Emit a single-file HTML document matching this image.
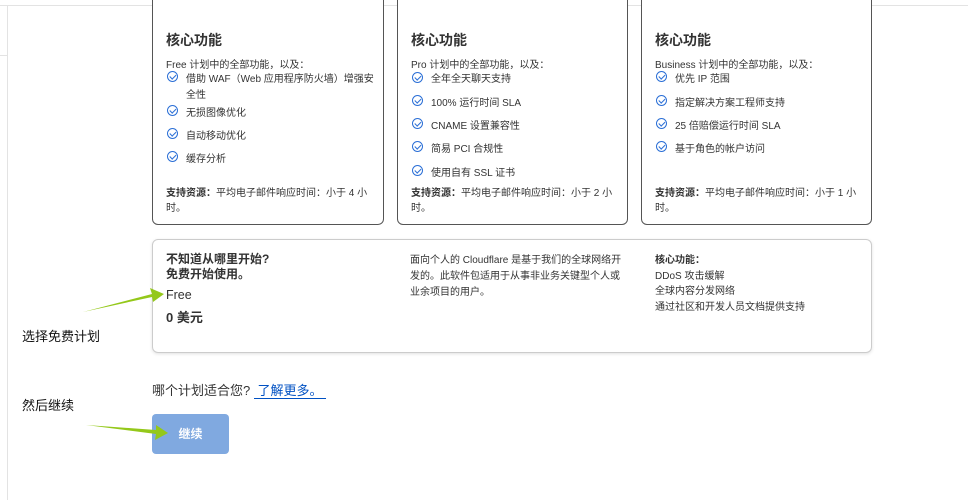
<!DOCTYPE html>
<html><head><meta charset="utf-8"><style>
body{margin:0;width:968px;height:500px;background:#fff;position:relative;overflow:hidden;font-family:"Liberation Sans","Noto Sans CJK SC",sans-serif;color:#222}
.a{position:absolute;white-space:nowrap}
.card{position:absolute;top:-10px;height:235px;border:1px solid #555;border-radius:6px;box-sizing:border-box;background:#fff}
.h{font-size:14px;font-weight:bold;color:#333}
.s{font-size:10px;color:#333}
.ck{position:absolute;width:9px;height:9px;border:1.3px solid #2b6fd6;border-radius:50%}
.ck:after{content:"";position:absolute;left:2.5px;top:1px;width:2.5px;height:5px;border:solid #2b6fd6;border-width:0 1.3px 1.3px 0;transform:rotate(45deg)}
</style></head><body>
<div style="position:absolute;left:0;top:5px;width:968px;height:1px;background:#e3e3e3"></div>
<div style="position:absolute;left:7px;top:5px;width:1px;height:495px;background:#e3e3e3"></div>
<div style="position:absolute;left:0;top:55px;width:7px;height:1px;background:#e3e3e3"></div>

<div class="card" style="left:152px;width:232px"></div>
<div class="card" style="left:397px;width:231px"></div>
<div class="card" style="left:641px;width:231px"></div>

<div class="a h" style="left:166px;top:30px">核心功能</div>
<div class="a s" style="left:166px;top:56px">Free 计划中的全部功能，以及：</div>
<div class="ck" style="left:167px;top:71px"></div><div class="a s" style="left:186px;top:70px">借助 WAF（Web 应用程序防火墙）增强安</div>
<div class="a s" style="left:186px;top:86px">全性</div>
<div class="ck" style="left:167px;top:105px"></div><div class="a s" style="left:186px;top:104px">无损图像优化</div>
<div class="ck" style="left:167px;top:128px"></div><div class="a s" style="left:186px;top:127px">自动移动优化</div>
<div class="ck" style="left:167px;top:151px"></div><div class="a s" style="left:186px;top:150px">缓存分析</div>
<div class="a s" style="left:166px;top:184px"><b>支持资源：</b>平均电子邮件响应时间：小于 4 小</div>
<div class="a s" style="left:166px;top:199px">时。</div>

<div class="a h" style="left:411px;top:30px">核心功能</div>
<div class="a s" style="left:411px;top:56px">Pro 计划中的全部功能，以及：</div>
<div class="ck" style="left:412px;top:72px"></div><div class="a s" style="left:431px;top:70px">全年全天聊天支持</div>
<div class="ck" style="left:412px;top:95px"></div><div class="a s" style="left:431px;top:94px">100% 运行时间 SLA</div>
<div class="ck" style="left:412px;top:118px"></div><div class="a s" style="left:431px;top:117px">CNAME 设置兼容性</div>
<div class="ck" style="left:412px;top:141px"></div><div class="a s" style="left:431px;top:140px">简易 PCI 合规性</div>
<div class="ck" style="left:412px;top:165px"></div><div class="a s" style="left:431px;top:164px">使用自有 SSL 证书</div>
<div class="a s" style="left:411px;top:184px"><b>支持资源：</b>平均电子邮件响应时间：小于 2 小</div>
<div class="a s" style="left:411px;top:199px">时。</div>

<div class="a h" style="left:655px;top:30px">核心功能</div>
<div class="a s" style="left:655px;top:56px">Business 计划中的全部功能，以及：</div>
<div class="ck" style="left:656px;top:71px"></div><div class="a s" style="left:675px;top:70px">优先 IP 范围</div>
<div class="ck" style="left:656px;top:95px"></div><div class="a s" style="left:675px;top:94px">指定解决方案工程师支持</div>
<div class="ck" style="left:656px;top:118px"></div><div class="a s" style="left:675px;top:117px">25 倍赔偿运行时间 SLA</div>
<div class="ck" style="left:656px;top:141px"></div><div class="a s" style="left:675px;top:140px">基于角色的帐户访问</div>
<div class="a s" style="left:655px;top:184px"><b>支持资源：</b>平均电子邮件响应时间：小于 1 小</div>
<div class="a s" style="left:655px;top:199px">时。</div>

<div style="position:absolute;left:152px;top:239px;width:720px;height:114px;border:1px solid #ccc;border-radius:6px;box-sizing:border-box;box-shadow:0 1px 3px rgba(0,0,0,.12)"></div>
<div class="a" style="left:166px;top:252px;font-size:12px;font-weight:bold;line-height:15px;color:#333">不知道从哪里开始?<br>免费开始使用。</div>
<div class="a" style="left:166px;top:288px;font-size:12.5px;color:#333">Free</div>
<div class="a" style="left:166px;top:307px;font-size:13px;font-weight:bold;color:#333">0 美元</div>
<div class="a s" style="left:410px;top:253px;line-height:16px">面向个人的 Cloudflare 是基于我们的全球网络开<br>发的。此软件包适用于从事非业务关键型个人或<br>业余项目的用户。</div>
<div class="a s" style="left:655px;top:253px;line-height:15.5px"><b>核心功能：</b><br>DDoS 攻击缓解<br>全球内容分发网络<br>通过社区和开发人员文档提供支持</div>

<div class="a" style="left:22px;top:326px;font-size:13px;color:#111">选择免费计划</div>
<div class="a" style="left:22px;top:395px;font-size:13px;color:#111">然后继续</div>
<div class="a" style="left:152px;top:380px;font-size:13px;color:#333">哪个计划适合您? <span style="color:#0051c3;border-bottom:1px solid #0051c3">&nbsp;了解更多。&nbsp;</span></div>
<div style="position:absolute;left:152px;top:414px;width:77px;height:40px;background:#80a9e0;border-radius:4px;color:#fff;font-size:12px;font-weight:bold;text-align:center;line-height:40px">继续</div>

<svg style="position:absolute;left:0;top:0" width="968" height="500">
<polygon points="83,312 152,294 150,288 164,294 153,302 152,297" fill="#94c81a"/>
<polygon points="86,425 156,430 156,425 168,433 155,440 156,434" fill="#94c81a"/>
</svg>
</body></html>
